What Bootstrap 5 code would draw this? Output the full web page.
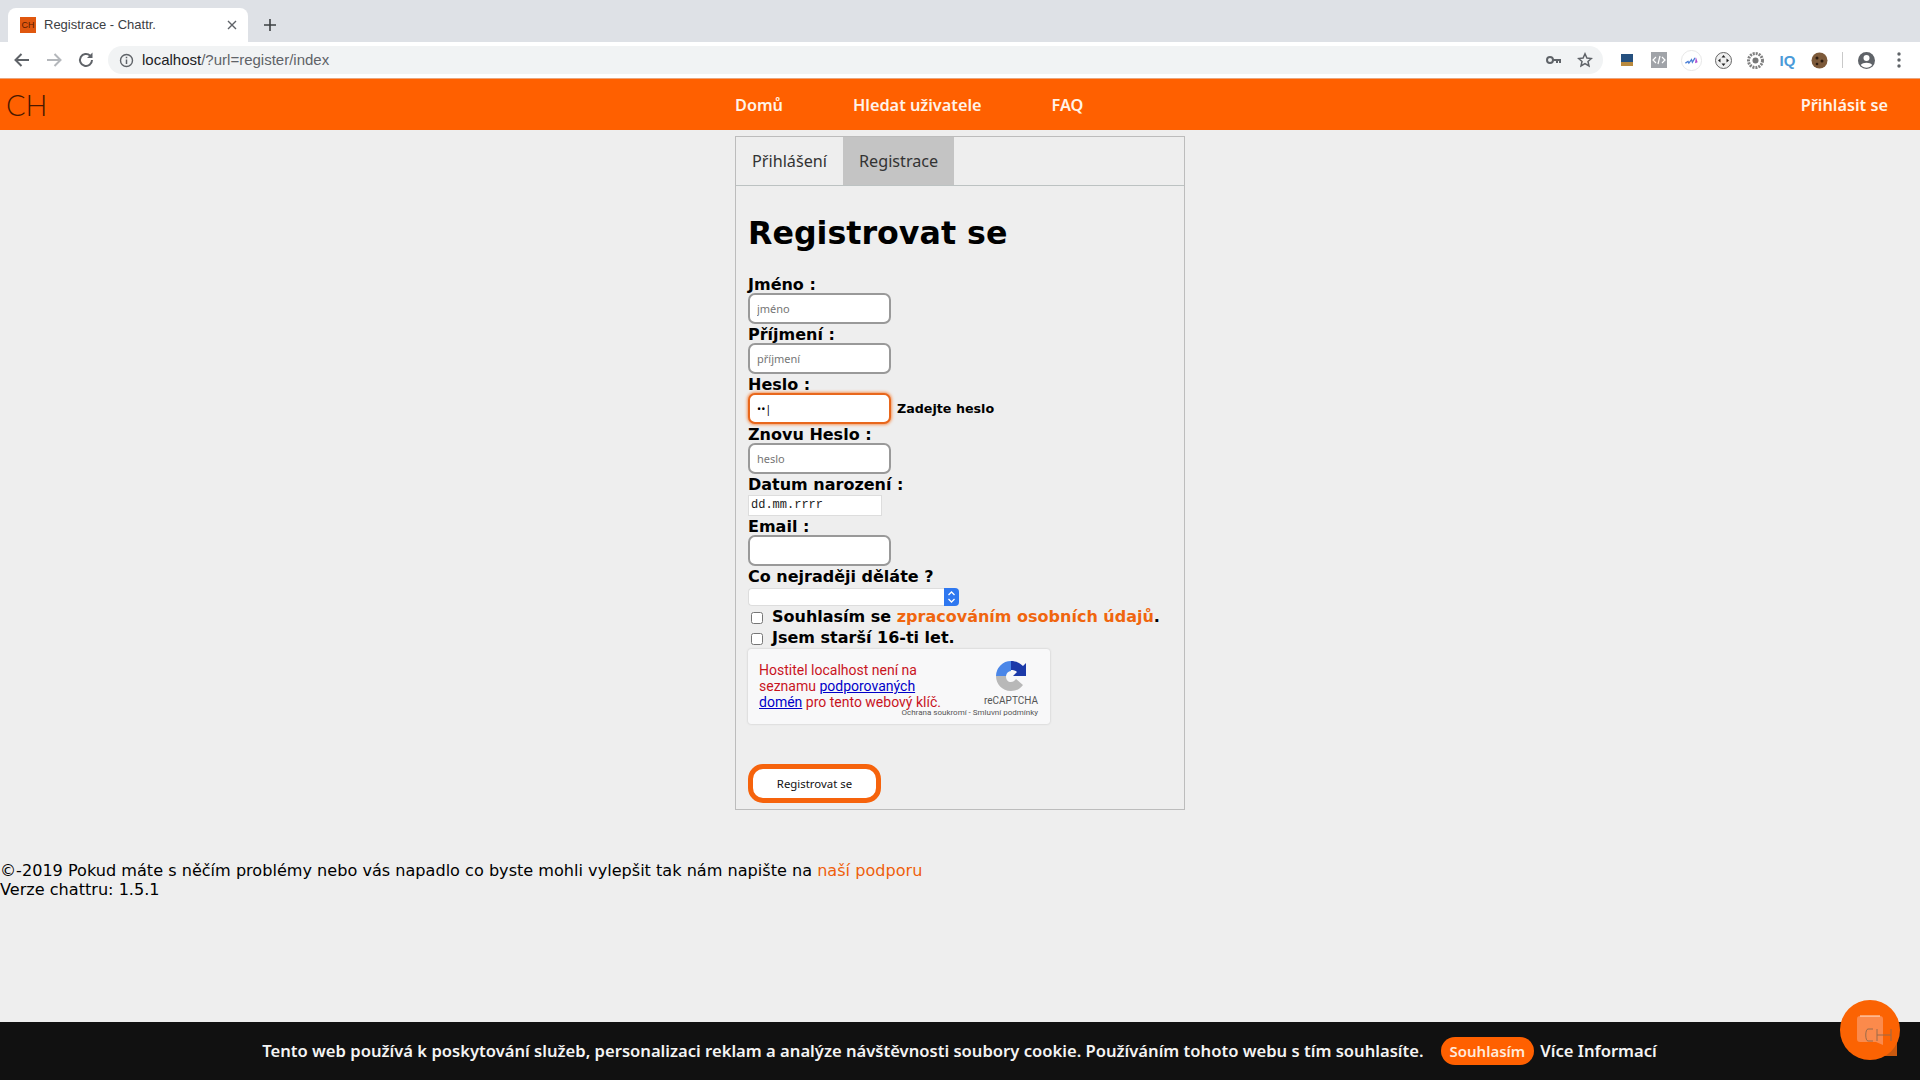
<!DOCTYPE html>
<html lang="cs">
<head>
<meta charset="UTF-8" />
<title>Registrace - Chattr.</title>
<link href="https://cdn.jsdelivr.net/npm/bootstrap@5.3.0/dist/css/bootstrap.min.css" rel="stylesheet" />
<style>
  html, body { height: 100%; }
  body { background: #eeeeee; font-family: "DejaVu Sans", Verdana, sans-serif; color: #000; overflow: hidden; }
  .page-wrap { height: 1080px; }

  /* browser chrome */
  .tab-strip { height: 42px; background: #dee1e6; padding: 8px 0 0 8px; font-family: "Liberation Sans", Arial, sans-serif; }
  .browser-tab { width: 240px; height: 34px; background: #fff; border-radius: 8px 8px 0 0; padding: 0 11px 0 12px; font-size: 13px; color: #3c4043; }
  .fav { width: 16px; height: 16px; background: #e0570f; color: #5a1d00; font-size: 9px; line-height: 16px; text-align: center; flex: none; }
  .plus-ic { margin: 10px 0 0 15px; }
  .tool-bar { height: 36px; background: #fff; padding: 0 12px 0 13px; font-family: "Liberation Sans", Arial, sans-serif; }
  .nav-ic { margin-left: 14px; }
  .url-box { width: 1495px; height: 28px; background: #f1f3f4; border-radius: 14px; padding: 0 10px 0 11px; font-size: 15px; margin-left: 13px; margin-right: 14px; color: #5f6368; flex: none; }
  .url-box b { font-weight: 400; color: #202124; }
  .ext-row { gap: 11px; flex: 1; }
  .ext-ic { width: 21px; height: 21px; flex: none; }
  .iq-ic { color: #4a9ad8; font-size: 15px; line-height: 21px; }
  .ext-sep { width: 1px; height: 16px; background: #c9c9c9; margin-left: 1px; }
  .prof-ic { margin-left: 2px; }
  .dots-ic { margin-left: 9px; }

  /* top bar */
  .top-bar { height: 52px; background: #ff6000; border-top: 1px solid #e9a47c; display: grid; grid-template-columns: 1fr 450px 1fr; align-items: center; font-family: "Noto Sans", sans-serif; }
  .ch-logo { font-family: Lato, sans-serif; font-weight: 300; font-size: 29px; color: #4a1800; padding-left: 6px; line-height: 1; }
  .top-links { gap: 70px; padding-top: 1px; }
  .top-links a, .login-link { color: #fff3e8; font-size: 16.3px; font-weight: 600; text-decoration: none; }
  .login-link { justify-self: end; padding-right: 32px; padding-top: 1px; }

  /* panel */
  .reg-panel { width: 450px; height: 674px; margin: 6px auto 0; border: 1px solid #bcbcbc; }
  .tabs-row { height: 49px; border-bottom: 1px solid #bcc2c2; font-family: "Noto Sans", sans-serif; font-size: 16.2px; }
  .tabs-row a { color: #333; text-decoration: none; padding: 0 16px; line-height: 48px; }
  .tabs-row a.now { background: #c4c4c4; }
  .reg-form { padding: 27px 12px 0; }
  .reg-form h1 { font-size: 31.7px; font-weight: 700; line-height: 40px; margin: 0 0 20px; }
  .f-lab { display: block; font-size: 16px; font-weight: 700; line-height: 24px; height: 20px; }
  .f-inp { display: block; width: 143px; height: 31px; border: 2px solid #999; border-radius: 7px; background: #fff; font-size: 11px; padding: 0 7px; font-family: "Noto Sans", sans-serif; outline: 0; margin-bottom: -1px; }
  .f-inp::placeholder { color: #757575; opacity: 1; }
  .f-inp.hot { border-color: #e8671c; box-shadow: 0 0 3px 1px #f5985f; color: #000; }
  .hint { font-size: 12.7px; font-weight: 700; margin-left: 6px; padding-top: 1px; }
  .date-box { width: 134px; height: 21px; background: #fff; border: 1px solid #ddd; font-family: "Liberation Mono", monospace; font-size: 12px; line-height: 19px; padding-left: 2px; margin: 2px 0 -1px; color: #222; }
  .pick { width: 211px; height: 18px; margin: 3px 0 0; }
  .pick select { appearance: none; flex: 1; height: 18px; border: 1px solid #ddd; border-right: 0; background: #fff; border-radius: 4px 0 0 4px; min-width: 0; }
  .pick span { width: 15px; height: 18px; background: #2f78f0; border-radius: 0 4px 4px 0; display: flex; align-items: center; justify-content: center; }
  .chk-row { height: 21px; font-size: 16px; font-weight: 700; line-height: 21px; white-space: nowrap; }
  .chk-row input { width: 12px; height: 12px; margin: 0 9px 0 3px; position: relative; top: 2px; }
  .chk-row a { color: #f0660f; text-decoration: none; }
  .cap-box { width: 302px; height: 75px; margin-top: 1px; background: #f8f8f9; border-radius: 3px; box-shadow: 0 0 2px #bbb; font-family: Roboto, sans-serif; font-size: 14px; line-height: 16px; color: #c8141e; padding: 13px 11px; position: relative; }
  .cap-box a { color: #0000c8; }
  .cap-mark { position: absolute; left: 247px; top: 11px; }
  .cap-name { position: absolute; right: 12px; top: 46px; font-size: 10px; line-height: 12px; color: #555; }
  .cap-law { position: absolute; right: 12px; top: 59px; font-size: 8px; line-height: 10px; color: #555; }
  .reg-btn { display: block; width: 133px; height: 39px; margin-top: 40px; background: #fff; border: 5px solid #f6630c; border-radius: 15px; font-family: "Noto Sans", sans-serif; font-size: 11.4px; color: #111; padding: 0; }
  .reg-btn:hover { background: #fff; border-color: #f6630c; color: #111; }

  .foot-note { margin-top: 51px; font-size: 16.1px; line-height: 19px; }
  .foot-note a { color: #ee5f0c; text-decoration: none; }

  /* cookie bar */
  .cookie-bar { position: fixed; left: 0; right: 0; bottom: 0; height: 58px; background: #111; color: #f4f4f4; font-family: "Noto Sans", sans-serif; font-size: 16.6px; font-weight: 600; gap: 6px; padding-right: 1px; }
  .ok-pill { background: #ff6000; border: 0; color: #ffeadb; font-size: 15px; font-weight: 600; border-radius: 14px; padding: 0 9px; height: 28px; line-height: 28px; margin-left: 11px; }
  .ok-pill:hover { background: #ff6000; color: #ffeadb; }
  .chat-bubble { position: fixed; left: 1840px; top: 1000px; width: 60px; height: 60px; background: #fb6303; border-radius: 50%; }
  .chat-corner { position: fixed; left: 1880px; top: 1040px; width: 17px; height: 16px; background: #c9590f; }
  .chat-inner { position: absolute; left: 16px; top: 15px; }
</style>
</head>
<body>
<div class="page-wrap">
  <div class="tab-strip d-flex">
    <div class="browser-tab d-flex align-items-center gap-2">
      <span class="fav">CH</span>
      <span class="flex-grow-1">Registrace - Chattr.</span>
      <svg width="10" height="10" viewBox="0 0 10 10"><path d="M1 1l8 8M9 1l-8 8" stroke="#5f6368" stroke-width="1.4"/></svg>
    </div>
    <svg class="plus-ic" width="14" height="14" viewBox="0 0 14 14"><path d="M7 1v12M1 7h12" stroke="#3c4043" stroke-width="1.6"/></svg>
  </div>

  <div class="tool-bar d-flex align-items-center">
    <svg width="18" height="16" viewBox="0 0 18 16"><path d="M16 8H3M8.5 2L2.5 8l6 6" fill="none" stroke="#5f6368" stroke-width="2"/></svg>
    <svg class="nav-ic" width="18" height="16" viewBox="0 0 18 16"><path d="M2 8h13M9.5 2l6 6-6 6" fill="none" stroke="#b4b7bb" stroke-width="2"/></svg>
    <svg class="nav-ic" width="18" height="18" viewBox="0 0 18 18"><path d="M15 9a6 6 0 1 1-1.8-4.3" fill="none" stroke="#5f6368" stroke-width="2"/><path d="M15.5 1.5v5.5H10z" fill="#5f6368"/></svg>
    <div class="url-box d-flex align-items-center">
      <svg width="15" height="15" viewBox="0 0 15 15" class="me-2"><circle cx="7.5" cy="7.5" r="6" fill="none" stroke="#5f6368" stroke-width="1.4"/><path d="M7.5 6.5v4.5M7.5 3.8v1.5" stroke="#5f6368" stroke-width="1.5"/></svg>
      <span class="flex-grow-1"><b>localhost</b>/?url=register/index</span>
      <svg width="15" height="10" viewBox="0 0 15 10" class="me-3"><circle cx="4" cy="5" r="3" fill="none" stroke="#5f6368" stroke-width="2"/><path d="M7 5h8M11 5v3M14 5v3" stroke="#5f6368" stroke-width="2"/></svg>
      <svg width="16" height="16" viewBox="0 0 16 16"><path d="M8 1.8l1.9 4.2 4.5.5-3.4 3 1 4.5L8 11.7 4 14l1-4.5-3.4-3 4.5-.5z" fill="none" stroke="#5f6368" stroke-width="1.5"/></svg>
    </div>
    <div class="ext-row d-flex align-items-center">
      <svg class="ext-ic" viewBox="0 0 21 21"><rect x="4" y="4" width="12" height="12" fill="#25507f"/><rect x="4" y="12" width="12" height="4" fill="#b98a3e"/></svg>
      <svg class="ext-ic" viewBox="0 0 21 21"><rect x="2" y="2" width="16" height="16" fill="#a0a3a8"/><path d="M7 7l-3 3 3 3M13 7l3 3-3 3M11 6l-2 8" fill="none" stroke="#fff" stroke-width="1.2"/></svg>
      <svg class="ext-ic" viewBox="0 0 24 24"><circle cx="12" cy="12" r="11.5" fill="#fff" stroke="#e3e3e3"/><path d="M5 15l3-2 1 2 3-4 1 3 3-5" fill="none" stroke="#4a7fd6" stroke-width="1.5"/><path d="M17 8l2 6-3 1z" fill="#b04fd0"/></svg>
      <svg class="ext-ic" viewBox="0 0 21 21"><circle cx="10.500" cy="10.500" r="8" fill="#eee" stroke="#666"/><path d="M10.500 5l2 2.500h-4zM10.500 16l2-2.500h-4zM5 10.500l2.500-2v4zM16 10.500l-2.500-2v4z" fill="#222"/></svg>
      <svg class="ext-ic" viewBox="0 0 21 21"><circle cx="10.500" cy="10.500" r="7" fill="none" stroke="#808080" stroke-width="3" stroke-dasharray="2 1"/><circle cx="10.500" cy="10.500" r="3" fill="#777"/></svg>
      <span class="ext-ic iq-ic fw-bold text-center">IQ</span>
      <svg class="ext-ic" viewBox="0 0 21 21"><circle cx="10.500" cy="10.500" r="8" fill="#7d5a3a"/><circle cx="8" cy="8" r="1.500" fill="#2d1c10"/><circle cx="13" cy="11" r="1.500" fill="#2d1c10"/><circle cx="8" cy="14" r="1.300" fill="#2d1c10"/></svg>
      <span class="ext-sep"></span>
      <svg class="ext-ic prof-ic" viewBox="0 0 21 21"><circle cx="10.500" cy="10.500" r="8.500" fill="#5f6368"/><circle cx="10.500" cy="8" r="3" fill="#fff"/><path d="M4.800 15c2-3 9.400-3 11.400 0-3 3.500-8.400 3.500-11.400 0z" fill="#fff"/></svg>
      <svg class="dots-ic" width="4" height="16" viewBox="0 0 4 16"><circle cx="2" cy="2" r="1.700" fill="#5f6368"/><circle cx="2" cy="8" r="1.700" fill="#5f6368"/><circle cx="2" cy="14" r="1.700" fill="#5f6368"/></svg>
    </div>
  </div>

  <nav class="top-bar">
    <span class="ch-logo">CH</span>
    <div class="top-links d-flex">
      <a href="#">Domů</a>
      <a href="#">Hledat uživatele</a>
      <a href="#">FAQ</a>
    </div>
    <a href="#" class="login-link">Přihlásit se</a>
  </nav>

  <main class="reg-panel">
    <div class="tabs-row d-flex">
      <a href="#">Přihlášení</a>
      <a href="#" class="now">Registrace</a>
    </div>
    <form class="reg-form">
      <h1>Registrovat se</h1>
      <label class="f-lab">Jméno :</label>
      <input class="f-inp" type="text" placeholder="jméno" />
      <label class="f-lab">Příjmení :</label>
      <input class="f-inp" type="text" placeholder="příjmení" />
      <label class="f-lab">Heslo :</label>
      <div class="d-flex align-items-center">
        <input class="f-inp hot" type="text" value="••|" />
        <span class="hint">Zadejte heslo</span>
      </div>
      <label class="f-lab">Znovu Heslo :</label>
      <input class="f-inp" type="text" placeholder="heslo" />
      <label class="f-lab">Datum narození :</label>
      <div class="date-box">dd.mm.rrrr</div>
      <label class="f-lab">Email :</label>
      <input class="f-inp" type="text" />
      <label class="f-lab">Co nejraději děláte ?</label>
      <div class="pick d-flex">
        <select aria-label="Co nejraději děláte"></select>
        <span><svg width="9" height="14" viewBox="0 0 9 14"><path d="M1.500 5l3-3 3 3M1.500 9l3 3 3-3" fill="none" stroke="#fff" stroke-width="1.300"/></svg></span>
      </div>
      <div class="chk-row"><input type="checkbox" />Souhlasím se <a href="#">zpracováním osobních údajů</a>.</div>
      <div class="chk-row"><input type="checkbox" />Jsem starší 16-ti let.</div>
      <div class="cap-box">
        Hostitel localhost není na<br />seznamu <a href="#">podporovaných</a><br /><a href="#">domén</a> pro tento webový klíč.
        <svg class="cap-mark" width="32" height="32" viewBox="0 0 32 32">
          <path d="M1 16A15 15 0 0 1 16 1l0 0 0 10a6 6 0 0 0-5 5z" fill="#4a86e8"/>
          <path d="M16 1c5 0 9 2 12 5l3-3v13H18l4-4c-1.500-1.500-3.500-2-6-2z" fill="#1c3aa9"/>
          <path d="M1 16h10c0 4 2 6 5 6 2 0 3.500-1 5-3l7 6c-3 4-7 6-12 6C7 31 1 24 1 16z" fill="#b8b8b8"/>
        </svg>
        <span class="cap-name">reCAPTCHA</span>
        <span class="cap-law">Ochrana soukromí - Smluvní podmínky</span>
      </div>
      <button type="button" class="btn reg-btn">Registrovat se</button>
    </form>
  </main>

  <footer class="foot-note">
    ©-2019 Pokud máte s něčím problémy nebo vás napadlo co byste mohli vylepšit tak nám napište na <a href="#">naší podporu</a><br />
    Verze chattru: 1.5.1
  </footer>
</div>

<div class="cookie-bar d-flex align-items-center justify-content-center">
  <span>Tento web používá k poskytování služeb, personalizaci reklam a analýze návštěvnosti soubory cookie. Používáním tohoto webu s tím souhlasíte.</span>
  <button type="button" class="btn ok-pill">Souhlasím</button>
  <span>Více Informací</span>
</div>
<span class="chat-corner"></span>
<div class="chat-bubble">
  <svg class="chat-inner" width="36" height="34" viewBox="0 0 36 34">
    <path d="M4 1h20a3 3 0 0 1 3 3v26l-7-3H4a3 3 0 0 1-3-3V4a3 3 0 0 1 3-3z" fill="#fb8a4c"/>
    <path d="M4 1h20" stroke="#ffe6d6" stroke-width="1"/>
    <path d="M17 14h-5c-3 0-3 12 0 12h5M21 14v12M35 14v12M21 20h14" fill="none" stroke="#9a6a4a" stroke-width="1"/>
  </svg>
</div>
<script src="https://cdn.jsdelivr.net/npm/bootstrap@5.3.0/dist/js/bootstrap.bundle.min.js"></script>
</body>
</html>
